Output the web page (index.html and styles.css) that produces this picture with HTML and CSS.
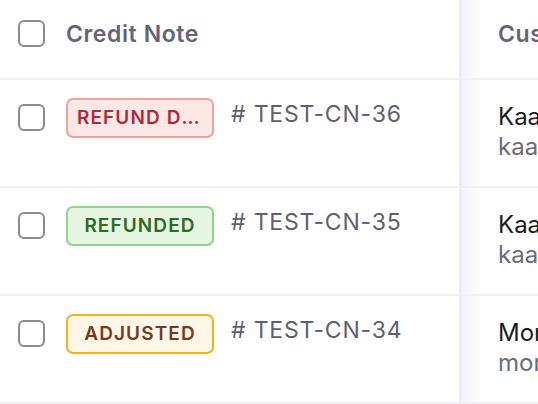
FILE: index.html
```html
<!DOCTYPE html>
<html lang="en">
<head>
    <meta charset="UTF-8">
    <meta name="viewport" content="width=device-width, initial-scale=1.0">
    <title>Credit Notes</title>
    <link rel="stylesheet" href="styles.css">
</head>
<body>
    <div class="table">
        <div class="row header">
            <div class="cell check"><span class="checkbox"></span></div>
            <div class="cell note">Credit Note</div>
            <div class="cell customer">Customer</div>
        </div>

        <div class="row">
            <div class="cell check"><span class="checkbox"></span></div>
            <div class="cell note">
                <span class="badge badge-red">Refund Due</span>
                <span class="number"># TEST-CN-36</span>
            </div>
            <div class="cell customer">
                <div class="name">Kaavya Sharma</div>
                <div class="email">kaavya.sharma@example.com</div>
            </div>
        </div>

        <div class="row">
            <div class="cell check"><span class="checkbox"></span></div>
            <div class="cell note">
                <span class="badge badge-green">Refunded</span>
                <span class="number"># TEST-CN-35</span>
            </div>
            <div class="cell customer">
                <div class="name">Kaavya Sharma</div>
                <div class="email">kaavya.sharma@example.com</div>
            </div>
        </div>

        <div class="row">
            <div class="cell check"><span class="checkbox"></span></div>
            <div class="cell note">
                <span class="badge badge-yellow">Adjusted</span>
                <span class="number"># TEST-CN-34</span>
            </div>
            <div class="cell customer">
                <div class="name">Monica Iyer</div>
                <div class="email">monica.iyer@example.com</div>
            </div>
        </div>
    </div>
</body>
</html>
```

FILE: styles.css
```css
body {
    margin: 0;
    background: #fff;
    font-family: 'Inter', 'Noto Sans', sans-serif;
    overflow: hidden;
}
.table {
    width: 900px;
}
.row {
    display: flex;
    height: 106px;
    border-bottom: 2px solid #f1f1f3;
}
.row.header {
    height: 78px;
}
.cell {
    box-sizing: border-box;
    height: 100%;
}
.check {
    width: 66px;
    padding-left: 18px;
    padding-top: 24px;
}
.header .check {
    padding-top: 20px;
}
.checkbox {
    display: block;
    width: 27px;
    height: 27px;
    box-sizing: border-box;
    border: 2px solid #8b8b90;
    border-radius: 6px;
}
.note {
    width: 393px;
    display: flex;
    align-items: flex-start;
    gap: 17px;
    padding-top: 18px;
}
.header .note,
.header .customer {
    display: flex;
    align-items: center;
    padding-top: 0;
    padding-bottom: 10px;
    font-size: 23px;
    font-weight: 600;
    letter-spacing: 0.6px;
    color: #63637a;
}
.badge {
    box-sizing: border-box;
    width: 148px;
    height: 40px;
    line-height: 36px;
    padding: 0 9px;
    border: 2px solid;
    border-radius: 7px;
    text-align: center;
    text-transform: uppercase;
    font-size: 19px;
    font-weight: 600;
    letter-spacing: 1.1px;
    white-space: nowrap;
    overflow: hidden;
    text-overflow: ellipsis;
}
.badge-red {
    background: #fde8e6;
    border-color: #f3a196;
    color: #af2a3b;
}
.badge-green {
    background: #e5f5e2;
    border-color: #91d58b;
    color: #2f6a24;
}
.badge-yellow {
    background: #fef6e7;
    border-color: #f8b116;
    color: #773a1e;
}
.number {
    line-height: 32px;
    font-size: 23px;
    color: #5f5f72;
    letter-spacing: 0.8px;
}
.customer {
    flex: 1;
    border-left: 2px solid #ecebf6;
    background: linear-gradient(to right, rgba(236, 235, 246, 0.7), rgba(255, 255, 255, 0) 20px);
    padding-left: 37px;
    padding-top: 22px;
    white-space: nowrap;
}
.name {
    font-size: 24px;
    line-height: 30px;
    color: #1b1b1f;
}
.email {
    font-size: 24px;
    line-height: 30px;
    color: #6b6b80;
}
```
